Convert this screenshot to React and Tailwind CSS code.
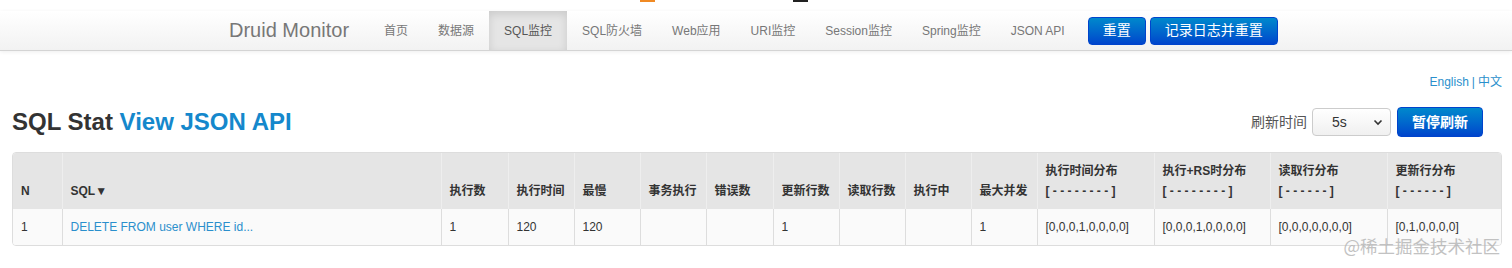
import React from 'react';

const font = { fontFamily: '"Liberation Sans", Arial, "Noto Sans CJK SC", sans-serif' };

export default function App() {
  // top navigation
  const navItems = ['首页', '数据源', 'SQL监控', 'SQL防火墙', 'Web应用', 'URI监控', 'Session监控', 'Spring监控', 'JSON API'];

  // table columns: label, second header line, width
  const columns = [
    { name: 'N', w: 'w-[49px]' },
    { name: 'SQL▼', w: 'w-[379px]' },
    { name: '执行数', w: 'w-[67px]' },
    { name: '执行时间', w: 'w-[66px]' },
    { name: '最慢', w: 'w-[66px]' },
    { name: '事务执行', w: 'w-[66px]' },
    { name: '错误数', w: 'w-[67px]' },
    { name: '更新行数', w: 'w-[66px]' },
    { name: '读取行数', w: 'w-[66px]' },
    { name: '执行中', w: 'w-[66px]' },
    { name: '最大并发', w: 'w-[66px]' },
    { name: '执行时间分布', sub: '[ - - - - - - - - ]', w: 'w-[117px]' },
    { name: '执行+RS时分布', sub: '[ - - - - - - - - ]', w: 'w-[116px]' },
    { name: '读取行分布', sub: '[ - - - - - - ]', w: 'w-[117px]' },
    { name: '更新行分布', sub: '[ - - - - - - ]', w: 'w-[116px]' },
  ];

  const row = ['1', 'DELETE FROM user WHERE id...', '1', '120', '120', '', '', '1', '', '', '1', '[0,0,0,1,0,0,0,0]', '[0,0,0,1,0,0,0,0]', '[0,0,0,0,0,0,0]', '[0,1,0,0,0,0]'];

  return (
    <div className="relative h-[268px] w-full overflow-hidden bg-white text-[#333]" style={font}>
      {/* cropped bits of the page above */}
      <div className="h-[11px] w-full bg-white flex">
        <div className="ml-[640px] h-[2px] w-[15px] bg-[#f08a24]" />
        <div className="ml-[138px] h-[2px] w-[15px] bg-[#222]" />
      </div>

      {/* Navbar */}
      <div className="h-[40px] w-full bg-gradient-to-b from-white to-[#f2f2f2] border-b border-[#d4d4d4] shadow-[0_1px_4px_rgba(0,0,0,0.07)]">
        <div className="flex h-[39px] items-center pl-[229px]">
          <span className="text-[20px] leading-[39px] text-[#777] mr-[5px] pr-[15px]">Druid Monitor</span>
          <nav className="flex h-full">
            {navItems.map((item) => (
              <a
                key={item}
                className={
                  'flex items-center px-[15px] text-[12px] ' +
                  (item === 'SQL监控'
                    ? 'bg-[#e5e5e5] text-[#555] shadow-[inset_0_3px_8px_rgba(0,0,0,0.12)]'
                    : 'text-[#777]')
                }
              >
                {item}
              </a>
            ))}
          </nav>
          <div className="ml-[8px] flex gap-[4px]">
            <button className="h-[28px] rounded-[4px] border border-[#0044cc] bg-gradient-to-b from-[#0088cc] to-[#0044cc] px-[14px] text-[14px] text-white">
              重置
            </button>
            <button className="h-[28px] rounded-[4px] border border-[#0044cc] bg-gradient-to-b from-[#0088cc] to-[#0044cc] px-[14px] text-[14px] text-white">
              记录日志并重置
            </button>
          </div>
        </div>
      </div>

      {/* Content */}
      <div className="px-[10px]">
        <div className="mt-[22px] flex justify-end text-[12px] leading-[18px] text-[#2a8fcc]">
          <a>English</a>
          <span className="mx-[3px]">|</span>
          <a>中文</a>
        </div>

        <div className="mt-[11px] flex h-[40px] items-center justify-between pl-[2px]">
          <h3 className="text-[24px] font-bold leading-[40px] text-[#333]">
            SQL Stat <a className="text-[#1588cc]">View JSON API</a>
          </h3>
          <div className="mr-[19px] flex items-center">
            <span className="text-[14px] text-[#555] mr-[5px]">刷新时间</span>
            <div className="flex h-[28px] w-[79px] items-center justify-between rounded-[4px] border border-[#ccc] bg-gradient-to-b from-white to-[#f0f0f0] pl-[19px] pr-[7px] text-[14px] text-[#333]">
              <span>5s</span>
              <svg width="10" height="10" viewBox="0 0 10 10" fill="none" stroke="#333" strokeWidth="1.6">
                <path d="M1.5 3.5 L5 7 L8.5 3.5" />
              </svg>
            </div>
            <button className="ml-[6px] h-[30px] rounded-[4px] border border-[#0044cc] bg-gradient-to-b from-[#0088cc] to-[#0044cc] px-[14px] text-[14px] font-bold text-white">
              暂停刷新
            </button>
          </div>
        </div>

        {/* Table */}
        <div className="mt-[10px] ml-[2px] overflow-hidden rounded-[4px] border border-[#ddd]">
          <table className="w-full table-fixed border-collapse text-[12px] leading-[20px]">
            <colgroup>
              {columns.map((c) => (
                <col key={c.name} className={c.w} />
              ))}
            </colgroup>
            <thead>
              <tr className="bg-[#e5e5e5]">
                {columns.map((c, i) => (
                  <th
                    key={c.name}
                    className={
                      'px-[8px] pt-[8px] pb-[8px] text-left align-bottom font-bold text-[#333] ' +
                      (i > 0 ? 'border-l border-[#eeeeee]' : '')
                    }
                  >
                    <div className="whitespace-nowrap">{c.name}</div>
                    {c.sub && <div className="whitespace-nowrap">{c.sub}</div>}
                  </th>
                ))}
              </tr>
            </thead>
            <tbody>
              <tr className="bg-[#fafafa]">
                {row.map((v, i) => (
                  <td
                    key={i}
                    className={
                      'px-[8px] py-[8px] text-left align-top text-[#333] ' +
                      (i > 0 ? 'border-l border-[#ddd]' : '')
                    }
                  >
                    {i === 1 ? <a className="text-[#2a8fcc]">{v}</a> : v}
                  </td>
                ))}
              </tr>
            </tbody>
          </table>
        </div>
      </div>

      {/* watermark */}
      <div className="absolute right-[12px] top-[234px] text-[17.5px] leading-[24px] text-[#b3b3b3] opacity-80" style={{ fontFamily: '"Noto Sans CJK SC", sans-serif' }}>
        @稀土掘金技术社区
      </div>
    </div>
  );
}
